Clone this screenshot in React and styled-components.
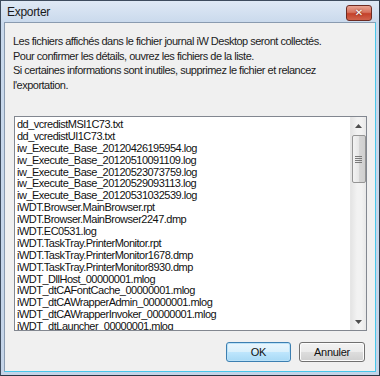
import React from "react";
import styled, { createGlobalStyle } from "styled-components";

const Global = createGlobalStyle`
  html, body { margin: 0; padding: 0; background: #ffffff; }
  * { box-sizing: border-box; }
`;

const Window = styled.div`
  width: 380px;
  height: 376px;
  display: flex;
  flex-direction: column;
  border: 1px solid #3e4c5e;
  border-right-color: #2a3644;
  border-bottom-color: #2a3644;
  background: linear-gradient(#dfe9f5, #c9d9ec 22px, #c4d4e8);
  padding: 0 3px 3px 3px;
  font-family: "Liberation Sans", Arial, sans-serif;
`;

const TitleBar = styled.div`
  height: 21px;
  flex: none;
  display: flex;
  align-items: center;
  justify-content: space-between;
  padding: 0 4px 0 3px;
`;

const Title = styled.span`
  font-size: 12px;
  letter-spacing: -0.3px;
  color: #1a1a1a;
`;

const CloseButton = styled.div`
  width: 26px;
  height: 16px;
  margin-top: 2px;
  border: 1px solid #6d2b22;
  border-radius: 3px;
  background: linear-gradient(#e8a493, #d7735f 45%, #c4412a 55%, #d0634c);
  display: flex;
  align-items: center;
  justify-content: center;
  color: #fff;
  font-family: "DejaVu Sans", sans-serif;
  font-size: 10px;
  font-weight: bold;
  text-shadow: 0 0 2px #5a1a10;
`;

const Client = styled.div`
  flex: 1;
  background: #f0f0f0;
  border: 1px solid #8a9bb0;
  border-bottom-color: #48c7ea;
  border-right-color: #48c7ea;
  display: flex;
  flex-direction: column;
  padding: 11px 8px 9px 8px;
`;

const Message = styled.p`
  margin: 0;
  font-size: 11px;
  letter-spacing: -0.5px;
  line-height: 14.5px;
  white-space: nowrap;
  color: #1c1c1c;
  height: 82px;
`;

const ListBox = styled.div`
  margin-left: 1px;
  height: 215px;
  border: 1px solid #828790;
  background: #fff;
  display: flex;
`;

const Items = styled.ul`
  list-style: none;
  margin: 0;
  padding: 2px 0 0 2px;
  flex: 1;
  overflow: hidden;
`;

const Item = styled.li`
  font-size: 11px;
  letter-spacing: -0.5px;
  line-height: 11.9px;
  height: 11.9px;
  color: #111;
  white-space: nowrap;
`;

const ScrollBar = styled.div`
  width: 16px;
  flex: none;
  background: linear-gradient(90deg, #e4e4e4, #f2f2f2 40%, #f2f2f2 70%, #e8e8e8);
  border-left: 1px solid #e6e6e6;
  display: flex;
  flex-direction: column;
  align-items: center;
`;

const Arrow = styled.div`
  height: 17px;
  width: 100%;
  display: flex;
  align-items: center;
  justify-content: center;
  flex: none;
`;

const Thumb = styled.div`
  width: 14px;
  height: 48px;
  margin-top: 1px;
  border: 1px solid #959595;
  border-radius: 2px;
  background: linear-gradient(90deg, #f3f3f3, #e6e6e6 50%, #d6d6d6 51%, #cfcfcf);
  display: flex;
  align-items: center;
  justify-content: center;
`;

const Track = styled.div`
  flex: 1;
`;

const Footer = styled.div`
  margin-top: auto;
  display: flex;
  justify-content: flex-end;
  gap: 8px;
  padding-right: 2px;
`;

const Button = styled.button`
  width: ${(p) => (p.$wide ? 66 : 65)}px;
  height: 20px;
  padding: 0;
  border-radius: 3px;
  border: 1px solid ${(p) => (p.$default ? "#3c7fb1" : "#707070")};
  background: ${(p) =>
    p.$default
      ? "linear-gradient(#eaf6fd, #d9f0fc 50%, #bee6fd 51%, #a7d9f5)"
      : "linear-gradient(#f2f2f2, #ebebeb 50%, #dddddd 51%, #cfcfcf)"};
  box-shadow: inset 0 0 0 1px ${(p) => (p.$default ? "#bbe2f8" : "#fcfcfc")};
  font-family: "Liberation Sans", Arial, sans-serif;
  font-size: 11px;
  letter-spacing: -0.3px;
  color: #111;
`;

const files = [
  "dd_vcredistMSI1C73.txt",
  "dd_vcredistUI1C73.txt",
  "iw_Execute_Base_20120426195954.log",
  "iw_Execute_Base_20120510091109.log",
  "iw_Execute_Base_20120523073759.log",
  "iw_Execute_Base_20120529093113.log",
  "iw_Execute_Base_20120531032539.log",
  "iWDT.Browser.MainBrowser.rpt",
  "iWDT.Browser.MainBrowser2247.dmp",
  "iWDT.EC0531.log",
  "iWDT.TaskTray.PrinterMonitor.rpt",
  "iWDT.TaskTray.PrinterMonitor1678.dmp",
  "iWDT.TaskTray.PrinterMonitor8930.dmp",
  "iWDT_DllHost_00000001.mlog",
  "iWDT_dtCAFontCache_00000001.mlog",
  "iWDT_dtCAWrapperAdmin_00000001.mlog",
  "iWDT_dtCAWrapperInvoker_00000001.mlog",
  "iWDT_dtLauncher_00000001.mlog",
];

export default function App() {
  return (
    <>
      <Global />
      <Window>
        <TitleBar>
          <Title>Exporter</Title>
          <CloseButton>✕</CloseButton>
        </TitleBar>
        <Client>
          <Message>
            Les fichiers affichés dans le fichier journal iW Desktop seront collectés.
            <br />
            Pour confirmer les détails, ouvrez les fichiers de la liste.
            <br />
            Si certaines informations sont inutiles, supprimez le fichier et relancez
            <br />
            l'exportation.
          </Message>
          <ListBox>
            <Items>
              {files.map((f) => (
                <Item key={f}>{f}</Item>
              ))}
            </Items>
            <ScrollBar>
              <Arrow>
                <svg width="7" height="4" viewBox="0 0 7 4">
                  <path d="M0 4 L3.5 0 L7 4 Z" fill="#4d4d4d" />
                </svg>
              </Arrow>
              <Thumb>
                <svg width="7" height="7" viewBox="0 0 7 7">
                  <path d="M0 0.5H7M0 2.5H7M0 4.5H7M0 6.5H7" stroke="#7a7a7a" strokeWidth="1" />
                </svg>
              </Thumb>
              <Track />
              <Arrow>
                <svg width="7" height="4" viewBox="0 0 7 4">
                  <path d="M0 0 L3.5 4 L7 0 Z" fill="#4d4d4d" />
                </svg>
              </Arrow>
            </ScrollBar>
          </ListBox>
          <Footer>
            <Button $default>OK</Button>
            <Button $wide>Annuler</Button>
          </Footer>
        </Client>
      </Window>
    </>
  );
}
